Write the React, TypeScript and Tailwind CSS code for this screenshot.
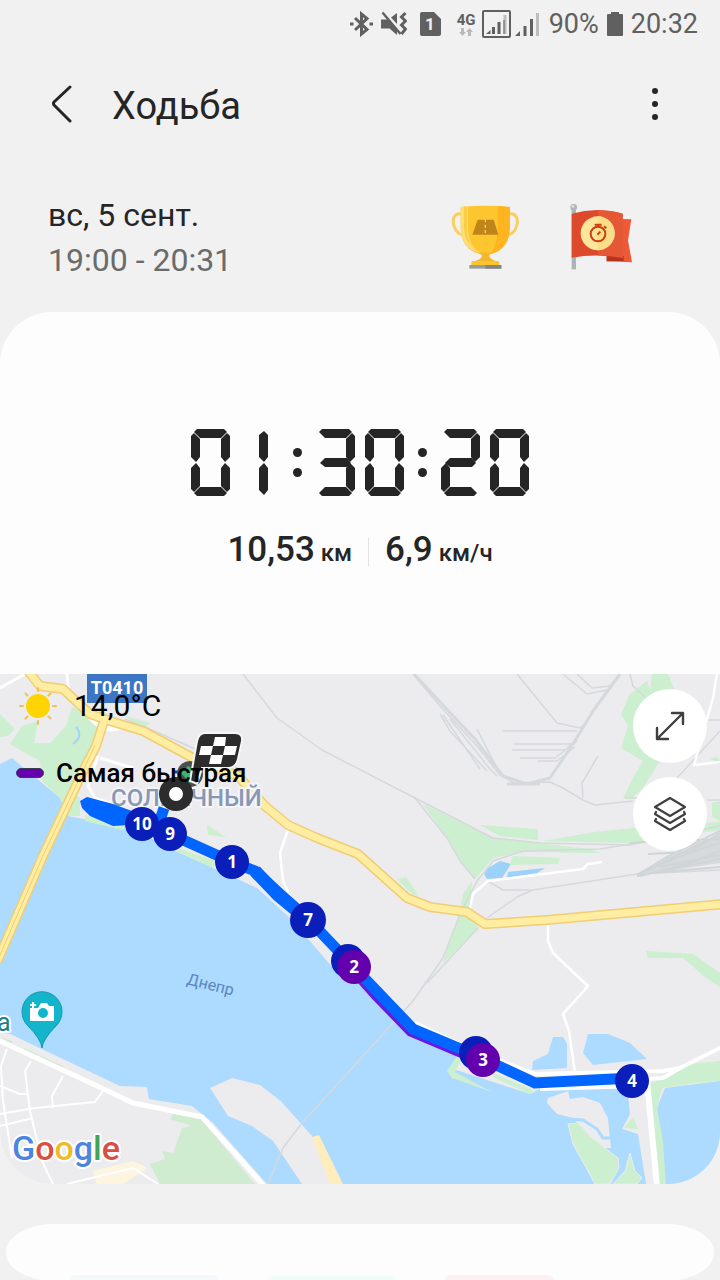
import React from 'react';

type Point = { x: number; y: number };

interface KmMarker extends Point {
  label?: string;
  fastest?: boolean;
  r?: number;
}

const KM_MARKERS: KmMarker[] = [
  { x: 142, y: 823, label: '10' },
  { x: 170, y: 833, label: '9' },
  { x: 232, y: 861, label: '1' },
  { x: 308, y: 919, label: '7', r: 18 },
  { x: 348, y: 960 },
  { x: 354, y: 966, label: '2', fastest: true },
  { x: 476, y: 1052 },
  { x: 483, y: 1059, label: '3', fastest: true },
  { x: 632, y: 1080, label: '4' },
];

const ROADS = [
  'M28 670 L40 685 L63 688 L90 713 L110 720 L143 730 L193 757 L238 775 L265 805 L288 824 L317 837 L358 853 L407 897 L430 906 L467 911 L485 923 L547 919 L724 903',
  'M104 720 L96 745 L84 768 L42 857 L-3 961',
];

// Each bar of the stopwatch display, keyed by its usual a-g position
const SEGMENTS: Record<string, string> = {
  a: '3,3 6,0 33,0 36,3 30,9 9,9',
  b: '39,7 36,4 30,10 30,28 34,33 39,28',
  c: '39,60 36,63 30,57 30,39 34,34 39,39',
  d: '3,64 6,67 33,67 36,64 30,58 9,58',
  e: '0,60 3,63 9,57 9,39 5,34 0,39',
  f: '0,7 3,4 9,10 9,28 5,33 0,28',
  g: '4,34 9,29 31,29 35,34 31,38 9,38',
  h: '19,28 19,6 24,2 28,6 28,28 24,33',
  i: '19,39 24,34 28,39 28,61 24,66 19,61',
};

const DIGITS: Record<string, string> = {
  '0': 'abcdef',
  '1': 'hi',
  '2': 'abged',
  '3': 'abgcd',
};

const Digit: React.FC<{ value: string }> = ({ value }) => (
  <svg viewBox="0 0 39 67" className="h-[67px] w-[39px]" fill="#252525">
    {DIGITS[value].split('').map((key) => (
      <polygon key={key} points={SEGMENTS[key]} />
    ))}
  </svg>
);

const Colon: React.FC = () => (
  <span className="flex h-[67px] w-[9px] flex-col items-center justify-center gap-[11px]">
    <span className="h-[9px] w-[9px] rounded-full bg-[#252525]" />
    <span className="h-[9px] w-[9px] rounded-full bg-[#252525]" />
  </span>
);

const Stopwatch: React.FC = () => (
  <time dateTime="PT1H30M20S" aria-label="01:30:20" className="flex justify-center gap-[14px]">
    <span className="flex gap-[10px]">
      <Digit value="0" />
      <Digit value="1" />
    </span>
    <Colon />
    <span className="flex gap-[10px]">
      <Digit value="3" />
      <Digit value="0" />
    </span>
    <Colon />
    <span className="flex gap-[10px]">
      <Digit value="2" />
      <Digit value="0" />
    </span>
  </time>
);

const StatusBar: React.FC = () => (
  <div className="flex h-12 shrink-0 items-center justify-end pr-[22px] text-[27px] text-[#606060]">
    {/* Bluetooth */}
    <svg viewBox="0 0 23 26" className="mr-2 h-[26px] w-[23px]" fill="none" stroke="currentColor" strokeWidth="3">
      <path d="M5 7 L17 18.500 L11.500 23 V3 L17 7.500 L5 19" />
      <path d="M0 13 h3.500 M19.500 13 h3.500" strokeWidth="3" />
    </svg>
    {/* Vibrate / mute */}
    <svg viewBox="0 0 26 26" className="mr-[13px] h-[26px] w-[26px]" fill="currentColor">
      <path d="M0 8.500 H7 L16 18 V24 L8.500 17.500 H0 Z" />
      <path d="M10 6.500 L16 2 V13 Z" />
      <path d="M1.500 1.500 L19.500 23" stroke="currentColor" strokeWidth="2.400" />
      <path d="M24.500 2 L20.500 6 L24.500 10 L20.500 14 L24.500 18 L20.500 23" fill="none" stroke="currentColor" strokeWidth="3" />
    </svg>
    {/* SIM slot */}
    <svg viewBox="0 0 21 24" className="mr-[15px] h-6 w-[21px]">
      <path d="M2 0 H14 L21 7 V22 Q21 24 19 24 H2 Q0 24 0 22 V2 Q0 0 2 0 Z" fill="currentColor" />
      <text x="10" y="18" textAnchor="middle" fontSize="17" fontWeight="700" fill="#f1f1f1">
        1
      </text>
    </svg>
    <div className="mr-[5px] flex w-[21px] flex-col items-center">
      <span className="text-[15px] leading-[15px] font-bold">4G</span>
      <svg viewBox="0 0 14 8" className="h-2 w-[14px]" fill="#b9b9b9">
        <path d="M2 0 H5 V4 H7 L3.500 8 L0 4 H2 Z M9 8 H12 V4 H14 L10.500 0 L7 4 H9 Z" />
      </svg>
    </div>
    <svg viewBox="0 0 29 28" className="mr-1 h-7 w-[29px]" fill="currentColor">
      <rect x="1" y="1" width="27" height="26" rx="1" fill="none" stroke="currentColor" strokeWidth="2" />
      <path d="M4 24 L8.500 20 V24 Z M10 17 h3 v7 h-3 Z M15.500 12 h3 v12 h-3 Z" />
      <path d="M21.500 5 h3 v19 h-3 Z" fill="#bdbdbd" />
      <path d="M21.500 10 h1 v14 h-1 Z" />
    </svg>
    <svg viewBox="0 0 25 25" className="mr-[9px] h-[25px] w-[25px]" fill="currentColor">
      <path d="M0 24 L5 19 V24 Z M8.500 14 h3 v10 h-3 Z M15 7 h3 v17 h-3 Z" />
      <path d="M21 1 h3 v23 h-3 Z" fill="#bdbdbd" />
    </svg>
    <span className="mr-2">90%</span>
    <svg viewBox="0 0 16 24" className="mr-2 h-6 w-4" fill="currentColor">
      <path d="M4 0 H12 V2 H15 Q16 2 16 3 V23 Q16 24 15 24 H1 Q0 24 0 23 V3 Q0 2 1 2 H4 Z" />
    </svg>
    <span>20:32</span>
  </div>
);

const TrophyIcon: React.FC = () => (
  <svg viewBox="65 40 204 195" className="h-[65px] w-[68px]" role="img" aria-label="Рекорд дистанции">
    <path d="M98 70 C72 66 68 88 75 108 Q82 132 106 134" fill="none" stroke="#f8cf60" strokeWidth="9" />
    <path d="M238 70 C264 66 268 88 261 108 Q254 132 230 134" fill="none" stroke="#f8cf60" strokeWidth="9" />
    <path d="M94 49 Q168 41 242 49 V108 Q240 176 184 190 H152 Q94 176 94 108 Z" fill="#fdc62f" />
    <path d="M94 49 Q110 46 116 46 V120 Q119 164 152 187 Q94 174 94 108 Z" fill="#fddd75" />
    <path d="M104 49 V108 Q106 160 148 184 Q110 160 112 108 V48 Z" fill="#fdcb3f" />
    <path d="M205 46 Q225 47 242 49 V108 Q240 176 184 190 Q205 160 205 108 Z" fill="#feb51f" />
    <path d="M148 186 H188 Q172 196 188 206 L203 213 H133 L150 206 Q166 196 148 186 Z" fill="#f4b62b" />
    <rect x="126" y="211" width="84" height="15" rx="3" fill="#fcc52f" />
    <rect x="120" y="223" width="96" height="11" fill="#9b9b9b" />
    <rect x="168" y="223" width="48" height="11" fill="#858585" />
    <path d="M145 87 H193 L207 132 H129 Z" fill="#c1841b" />
    <path d="M168 86 V134" stroke="#f8cf60" strokeWidth="4" strokeDasharray="9 7" />
  </svg>
);

const FlagIcon: React.FC = () => (
  <svg viewBox="418 38 192 201" className="h-[67px] w-[64px]" role="img" aria-label="Рекорд времени">
    <path d="M578 86 L605 87 L595 150 L607 216 L531 213 V195 H578 Z" fill="#ee5a38" />
    <path d="M531 197 H582 V212 L531 213 Z" fill="#b7341c" />
    <rect x="426" y="58" width="13" height="179" fill="#aeb3b6" />
    <circle cx="432" cy="51" r="10" fill="#aeb3b6" />
    <circle cx="430" cy="48" r="5" fill="#d5d9da" />
    <path d="M426 70 Q502 48 579 70 V203 Q502 188 426 202 Z" fill="#dc4a2b" />
    <path d="M505 60 Q545 60 579 70 V203 Q545 195 505 195 Z" fill="#e65735" />
    <circle cx="504" cy="129" r="51" fill="#fce69a" />
    <path d="M504 78 A51 51 0 0 1 504 180 Z" fill="#f9dd87" />
    <g fill="none" stroke="#cf3d14" strokeWidth="6">
      <circle cx="505" cy="131" r="22" />
      <path d="M495 103 H516 M505 103 V110 M523 108 L530 114 M503 133 L512 124" />
    </g>
  </svg>
);

const MapLand: React.FC = () => (
  <g>
    <rect x="0" y="673" width="720" height="510" fill="#ecebed" />
    <path
      d="M0 763 L12 757 L60 797 L68 815 L110 823 L140 832 L180 852 L213 867 L257 887 L290 917 L333 967 L363 985 L408 1032 L460 1054 L450 1067 L530 1093 L540 1088 L615 1087 L628 1094 L630 1113 L622 1128 L638 1133 L646 1183 L267 1183 L213 1122 L192 1105 L149 1098 L147 1086 L120 1085 L10 1033 L0 1031 Z"
      fill="#addaff"
    />
    <path d="M665 1087 L720 1080 V1183 H665 L657 1107 Z" fill="#addaff" />
    <g fill="#addaff">
      <path d="M533 1060 L548 1053 L553 1036 H563 L567 1043 V1067 L532 1069 Z" />
      <path d="M588 1033 H608 L630 1042 L647 1058 L593 1064 L583 1052 Z" />
      <path d="M488 867 L500 860 L511 863 L502 877 L487 878 L484 873 Z" fill="#9cd1fb" />
      <path d="M508 871 L545 867 L537 872 L507 877 Z" fill="#9cd1fb" />
    </g>
    <g fill="#cbefcf">
      <path d="M0 713 L15 728 L8 735 L0 736 Z" />
      <path d="M10 743 L22 725 L38 720 L34 742 L50 742 L66 725 L72 706 L92 715 L101 723 L92 745 L80 765 L70 790 L80 797 L80 815 L68 815 L60 797 L42 780 L40 760 L22 750 Z" />
      <path d="M125 715 L150 722 L143 728 Z" />
      <path d="M207 824 L226 836 L208 834 Z" />
      <path d="M85 814 L128 826 L122 829 L85 820 Z M178 847 L215 860 L213 867 L178 851 Z" />
      <path d="M423 803 L493 837 L590 848 L600 852 L523 851 L493 857 L475 878 L460 860 L447 837 Z" />
      <path d="M480 824 L538 828 V839 L500 835 Z" />
      <path d="M543 840 L595 831 L633 827 L720 821 V829 L633 842 Z" />
      <path d="M712 802 L720 800 V820 L712 816 Z" />
      <path d="M513 855 L560 857 L558 863 L510 864 Z" />
      <path d="M397 878 L406 876 L419 895 L412 893 Z" />
      <path d="M472 880 L463 893 L459 913 L443 962 L478 927 L470 908 Z" />
      <path d="M652 673 H668 L675 690 L660 760 L642 788 L630 798 L623 797 L633 777 L643 760 L621 747 L628 725 L621 713 L630 693 L647 680 L650 690 Z" />
      <path d="M710 758 L716 756 L720 759 V762 Z" />
      <path d="M646 950 L693 953 L720 972 V986 L705 976 L683 957 L648 957 Z" />
      <path d="M650 1083 L690 1063 L720 1060 V1080 L697 1082 L662 1087 L657 1107 L663 1140 L666 1183 H658 Z" />
      <path d="M457 1055 L447 1070 L452 1077 L492 1091 L455 1071 L462 1058 Z M493 1072 L533 1089 L530 1093 L493 1076 Z" />
      <path d="M633 1116 L638 1128 L624 1127 Z" />
    </g>
    <path d="M210 1087 L232 1077 L260 1084 L277 1097 L300 1123 L312 1135 L334 1183 H302 L273 1140 L252 1125 L228 1115 Z" fill="#ecebed" />
    <path d="M279 1098 L312 1135 L306 1145 L290 1130 Z" fill="#ecebed" />
    <path d="M312 1136 L319 1134 L343 1183 H330 Z" fill="#ffedbd" />
    <path
      d="M548 1097 L568 1090 L570 1098 L583 1096 L600 1102 L608 1117 L611 1147 L605 1147 L590 1137 L573 1117 L557 1113 L547 1102 Z"
      fill="#ecebed"
    />
    <path d="M568 1118 L583 1119 L597 1128 L603 1137 H612" fill="none" stroke="#addaff" strokeWidth="3" />
    <g fill="#cbefcf" stroke="#ecebed" strokeWidth="1">
      <path d="M568 1123 L578 1122 L592 1137 L618 1157 L619 1167 L610 1183 H595 L573 1143 Z" />
      <path d="M630 1152 L635 1170 L642 1177 L637 1183 H613 L625 1170 Z" />
    </g>
    <path
      d="M173 1113 L200 1117 L255 1183 H160 L150 1163 L165 1158 L162 1150 L173 1152 L182 1127 L192 1125 L170 1118 Z"
      fill="#cfebd0"
    />
    <path d="M24 1047 L65 1066 L60 1067 L24 1051 Z M0 1036 L12 1040 V1043 Z" fill="#cfebd0" />
    <path d="M92 1170 L133 1160 L148 1167 L123 1183 H97 Z" fill="#fef5e0" />
    <path d="M76 726 Q84 735 73 743" fill="none" stroke="#a5d4fb" strokeWidth="2" />
  </g>
);

const MapLines: React.FC = () => (
  <g fill="none" strokeLinejoin="round">
    {/* Railways */}
    <g stroke="#d6d9db" strokeWidth="1.500">
      <path d="M243 673 L277 717 L322 749 L415 797 L493 837 L540 842 L630 844 L720 825" />
      <path d="M125 718 L147 727 L193 747 L240 768" />
      <path d="M268 1183 L283 1147 L302 1122 L413 1000 L443 957 L460 913 L477 880 L493 860 L523 850 L600 848 L660 838" />
      <path d="M415 797 L447 837 L460 860 L475 878 M427 982 L478 927" />
      <path d="M413 673 L440 705 L477 745 L500 774 L514 782 L550 781 L563 787 L583 799 L595 804 L633 800" />
      <path d="M440 713 L450 730 L487 770 M443 714 L480 768 M477 728 L500 773 M450 718 L490 768 L497 775" />
      <path d="M517 673 L557 722 L580 727 L588 720 M563 673 L587 693 L607 689 M577 673 L592 687 L610 685" />
      <path d="M503 730 H577 M513 743 H573 M512 749 H565 L577 738 M520 757 H555 L577 740 M538 760 H557 L575 746" />
      <path d="M598 755 L582 782 L583 797 M630 673 L633 685 L645 696 M677 777 L720 730" />
      <path d="M488 880 L503 889 L533 889 L637 873 L720 869 M487 917 L517 896 L533 889 M700 719 H720 M625 797 H645 M707 799 H720" />
    </g>
    <g stroke="#d6d9db" strokeWidth="3">
      <path d="M414 673 L455 717 L475 738 L503 775 L527 783 L550 777 L573 743 L593 710 L620 673" />
      <path d="M507 783 H540" />
    </g>
    <path d="M637 875 L667 857 L690 848 L720 832 V862 L680 868 Z" fill="#d6dadc" />
    <g stroke="#d0d5d8" strokeWidth="2">
      <path d="M630 842 L660 840 L720 838 M648 853 L690 851 L720 832 M637 874 L665 857 L720 830 M637 874 L680 855 L720 842" />
      <path d="M640 875 L690 862 L720 850 M637 875 L720 858 M650 872 L720 866 M655 865 L705 840 L720 836 M660 866 L720 854" />
    </g>
    {/* Streets */}
    <g stroke="#fff" strokeWidth="3">
      <path d="M0 687 L25 673 M67 673 L69 697 M98 755 L88 785 L95 797 L113 803 M100 757 L133 767" />
      <path d="M288 829 L280 852 L283 880 L290 895 M470 907 L473 893 L488 880 L583 868 L588 863 L602 861" strokeWidth="2.500" />
      <path d="M717 673 L713 697 L694 764 L720 761 M548 923 V940 L553 952 L588 985 L563 1013 L569 1030 L575 1072" strokeWidth="2.500" />
      <path d="M7 1048 L1 1065 L3 1100 L12 1157 M0 1085 L20 1093 H28 M0 1113 L35 1107 L95 1101 L103 1090" strokeWidth="2" />
      <path d="M31 1060 L25 1070 L30 1110 L42 1160 L53 1183 M63 1075 L52 1095 L53 1107 M0 1125 L33 1117 M67 1183 L133 1167 L158 1183" strokeWidth="2" />
    </g>
    <g stroke="#fff" strokeWidth="5">
      <path d="M-2 1039 L93 1083 L133 1102 L202 1116 L233 1150 L264 1185" />
      <path d="M415 1022 L470 1048 L535 1073 L663 1070 L680 1067 L722 1046" strokeWidth="4" />
      <path d="M647 1078 L663 1077 L682 1066 M540 1088 L640 1085" strokeWidth="4" />
      <path d="M647 1080 L657 1185" strokeWidth="6" />
    </g>
    <path d="M90 714 Q105 732 122 724" stroke="#fff" strokeWidth="8" />
    {ROADS.map((d) => (
      <path key={d} d={d} stroke="#f1cd74" strokeWidth="10" />
    ))}
    {ROADS.map((d) => (
      <path key={d} d={d} stroke="#ffeda2" strokeWidth="7" />
    ))}
    <path d="M95 744 L84 768 L42 857 L-3 961" stroke="#f1cd74" strokeWidth="1" />
  </g>
);

const RouteMap: React.FC = () => (
  <svg viewBox="0 673 720 510" className="block w-full font-[Roboto,sans-serif]" role="img" aria-label="Карта маршрута">
    <MapLand />
    <MapLines />

    {/* Place labels */}
    <rect x="87" y="673" width="60" height="29" fill="#3c76c4" />
    <text x="117" y="693" textAnchor="middle" fontSize="18" fontWeight="700" fill="#fff">
      T0410
    </text>
    <g stroke="#fff" strokeWidth="4" strokeLinejoin="round" paintOrder="stroke">
      <text x="111" y="805" fontSize="24" fontWeight="500" fill="#8898b4" stroke="#f4f5f8">
        СОЛНЕЧНЫЙ
      </text>
      <text x="-3" y="1030" fontSize="25" fill="#1b7f8e">
        а
      </text>
    </g>
    <text x="186" y="983" fontSize="16" fill="#5a86c0" transform="rotate(14 186 983)">
      Днепр
    </text>

    {/* Route */}
    <path d="M354 969 L376 994 L411 1030 L465 1053" fill="none" stroke="#6d16e0" strokeWidth="11" />
    <path d="M80 800 L87 796 L113 803 L132 810 L130 824 L113 825 L90 815 L82 807 Z" fill="#0066ff" />
    <path
      d="M125 817 L170 833 L232 861 L255 870 L280 893 L308 918 L348 960 L413 1028 L475 1054 L535 1082 L632 1077 M164 807 L158 825"
      fill="none"
      stroke="#0066ff"
      strokeWidth="11"
    />
    <path d="M255 870 L278 894 L308 919" fill="none" stroke="#0066ff" strokeWidth="13" />

    {/* Start and finish */}
    <path d="M173 771 L185 771" stroke="#0a4fd0" strokeWidth="3" />
    <circle cx="190" cy="773" r="13" fill="#4a4f4d" />
    <path d="M181 772 L188 765 L196 770 L200 776 L190 782 Z" fill="#35b877" />
    <path
      d="M205 732 H235 Q243 732 242 740 L238 758 Q236 767 228 767 H202 L197 783 L190 780 L197 740 Q199 732 205 732 Z"
      fill="#2c2c2c"
      stroke="#f6f6f6"
      strokeWidth="2"
    />
    <path d="M215 736 H226 L225 745 H213 Z M201 745 H213 L211 754 H199 Z M225 745 H237 L235 754 H223 Z M211 754 H223 L221 763 H209 Z" fill="#fff" />
    <circle cx="176" cy="793" r="12" fill="#fff" stroke="#2c2c2c" strokeWidth="10" />

    {KM_MARKERS.map(({ x, y, label, fastest, r = 17 }) => (
      <g key={`${x}-${y}`}>
        <circle cx={x} cy={y} r={r} fill={fastest ? '#6300ae' : '#0a1fb9'} />
        {label && (
          <text x={x} y={y + 6} textAnchor="middle" fontSize="17" fontWeight="700" fill="#fff" fontFamily="Noto Sans, sans-serif">
            {label}
          </text>
        )}
      </g>
    ))}

    {/* Viewpoint pin */}
    <path d="M42 1047 Q41 1038 28 1025 A20 20 0 1 1 56 1025 Q43 1038 42 1047 Z" fill="#14b5cb" stroke="#1499ad" strokeWidth="1" />
    <path d="M30 1007 H38 L41 1002 H47 L49 1005 H54 V1020 H30 Z" fill="#fff" />
    <path d="M33 1000 V1007 M29 1004 H37" stroke="#14b5cb" strokeWidth="5" />
    <path d="M33 1001 V1007 M30 1004 H36" stroke="#fff" strokeWidth="2" />
    <circle cx="43" cy="1012" r="5" fill="#14b5cb" />

    <text
      x="12"
      y="1159"
      fontSize="34"
      fontWeight="500"
      stroke="#fff"
      strokeWidth="4"
      strokeLinejoin="round"
      paintOrder="stroke"
    >
      <tspan fill="#4c85e0">G</tspan>
      <tspan fill="#d94f41">o</tspan>
      <tspan fill="#efbb24">o</tspan>
      <tspan fill="#4c85e0">g</tspan>
      <tspan fill="#3fa45c">l</tspan>
      <tspan fill="#d94f41">e</tspan>
    </text>
  </svg>
);

const MapLegend: React.FC = () => (
  <ul className="absolute top-[13px] left-4 flex flex-col gap-8 text-black">
    <li className="flex h-9 items-center gap-[14px] text-[30px]">
      <svg viewBox="0 0 44 40" className="h-10 w-11" aria-hidden="true">
        <circle cx="22" cy="21" r="12" fill="#ffd400" />
        <path
          d="M22 3 V6 M22 36 V39 M4 21 H7 M37 21 H40 M9.500 8.500 L11.500 10.500 M34.500 8.500 L32.500 10.500 M9.500 33.500 L11.500 31.500 M34.500 33.500 L32.500 31.500"
          stroke="#f0c050"
          strokeWidth="2"
          strokeLinecap="round"
        />
      </svg>
      14,0°C
    </li>
    <li className="flex h-9 items-center gap-3 text-[26px] font-medium">
      <span className="h-[10px] w-7 rounded-[5px] border border-[#3c3c50] bg-[#6500ae]" />
      Самая быстрая
    </li>
  </ul>
);

const MapControls: React.FC = () => (
  <div className="absolute top-[15px] right-[13px] flex flex-col gap-[14px] text-[#404040]">
    <button type="button" aria-label="Развернуть карту" className="flex h-[74px] w-[74px] items-center justify-center rounded-full bg-white">
      <svg viewBox="0 0 30 30" className="h-[30px] w-[30px]" fill="none" stroke="currentColor" strokeWidth="2.400" strokeLinecap="round" strokeLinejoin="round">
        <path d="M2 28 L28 2 M17 2 H28 V13 M2 17 V28 H13" />
      </svg>
    </button>
    <button type="button" aria-label="Слои карты" className="flex h-[74px] w-[74px] items-center justify-center rounded-full bg-white">
      <svg viewBox="0 0 34 34" className="h-[34px] w-[34px]" fill="none" stroke="currentColor" strokeWidth="2.200" strokeLinecap="round" strokeLinejoin="round">
        <path d="M17 1 L32 10 L17 19 L2 10 Z" />
        <path d="M3 15 L2 17 L17 26 L32 17 L31 15" />
        <path d="M3 22 L2 24 L17 33 L32 24 L31 22" />
      </svg>
    </button>
  </div>
);

export default function App() {
  return (
    <div className="flex h-screen flex-col overflow-hidden bg-[#f1f1f1] font-[Roboto,sans-serif] text-[#252525]">
      <StatusBar />

      <header className="flex h-28 shrink-0 items-center px-[50px]">
        <button type="button" aria-label="Назад" className="mr-10">
          <svg viewBox="0 0 22 38" className="h-[38px] w-[22px]" fill="none" stroke="currentColor" strokeWidth="3" strokeLinecap="round" strokeLinejoin="round">
            <path d="M20 2 L4 17 Q3 18 4 20 L20 36" />
          </svg>
        </button>
        <h1 className="grow pt-1 text-[38px] leading-[48px]">Ходьба</h1>
        <button type="button" aria-label="Ещё" className="flex w-[30px] flex-col items-center gap-[7px]">
          <span className="h-[6px] w-[6px] rounded-full bg-[#252525]" />
          <span className="h-[6px] w-[6px] rounded-full bg-[#252525]" />
          <span className="h-[6px] w-[6px] rounded-full bg-[#252525]" />
        </button>
      </header>

      <section className="flex shrink-0 items-center justify-between pt-[33px] pr-[87px] pb-[29px] pl-12 text-[32px] leading-[45px]">
        <div>
          <p>вс, 5 сент.</p>
          <p className="text-[#6b6b6b]">19:00 - 20:31</p>
        </div>
        <div className="flex items-center gap-[50px] pb-1">
          <TrophyIcon />
          <FlagIcon />
        </div>
      </section>

      <main className="shrink-0 overflow-hidden rounded-[52px] bg-[#fdfdfd]">
        <div className="pt-[117px] pb-24">
          <Stopwatch />
          <div className="mt-[29px] flex items-center justify-center gap-4 text-[35px] leading-[49px] font-medium">
            <p className="flex items-baseline gap-[6px]">
              10,53<span className="text-[24px]">км</span>
            </p>
            <span className="h-7 w-px bg-[#e2e2e2]" />
            <p className="flex items-baseline gap-[6px]">
              6,9<span className="text-[24px]">км/ч</span>
            </p>
          </div>
        </div>
        <div className="relative">
          <RouteMap />
          <MapLegend />
          <MapControls />
        </div>
      </main>

      {/* Next card sliding in */}
      <section className="mx-[6px] mt-10 flex h-[57px] shrink-0 items-end gap-12 overflow-hidden rounded-[48px/28px] bg-[#fdfdfd] pl-[63px]">
        <span className="h-[6px] w-[150px] rounded-t-[6px] bg-[#f3f9fa]" />
        <span className="h-[5px] w-[129px] rounded-t-[5px] bg-[#f0fcfa]" />
        <span className="h-[6px] w-[110px] rounded-t-[6px] bg-[#fdf2f2]" />
      </section>
    </div>
  );
}
